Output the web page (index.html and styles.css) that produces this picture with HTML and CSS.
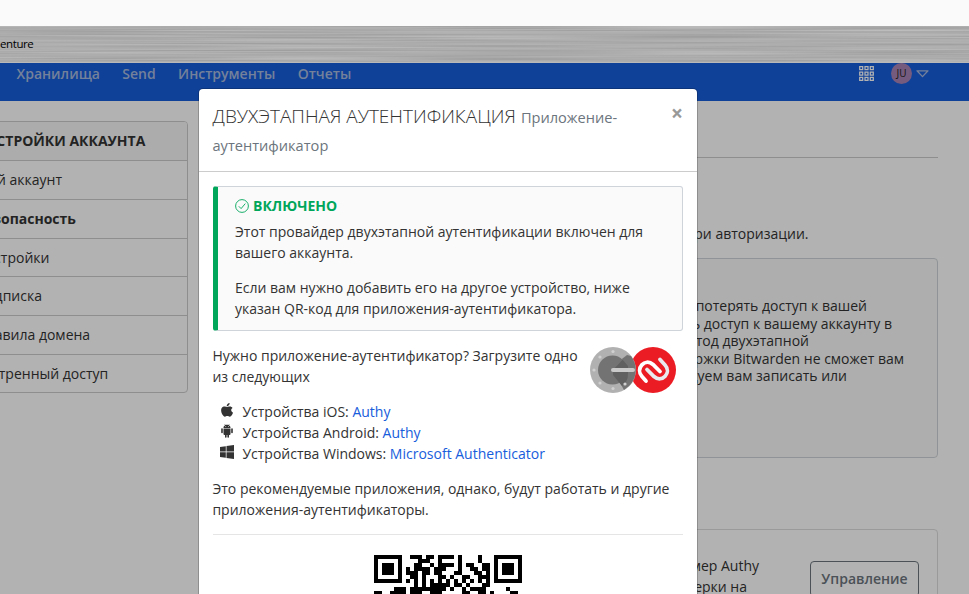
FILE: index.html
```
<!DOCTYPE html>
<html lang="ru">
<head>
<meta charset="utf-8">
<title>Двухэтапная аутентификация</title>
<link rel="stylesheet" href="styles.css">
</head>
<body>
<div class="topbar"></div>
<div class="bookmarks">
  <svg class="metal" width="969" height="37" aria-hidden="true"><filter id="brush" x="0" y="0" width="100%" height="100%" color-interpolation-filters="sRGB"><feTurbulence type="fractalNoise" baseFrequency="0.005 0.7" numOctaves="1" seed="4"/><feColorMatrix values="0.2 0 0 0 0.575  0.2 0 0 0 0.575  0.2 0 0 0 0.575  0 0 0 0 1"/></filter><rect width="969" height="37" filter="url(#brush)"/></svg>
  <span class="bookmark">enture</span>
</div>
<div class="app">
  <header class="navbar">
    <nav class="nav"><a>Хранилища</a><a>Send</a><a>Инструменты</a><a>Отчеты</a></nav>
    <div class="account">
      <svg class="grid-icon" width="15" height="15" viewBox="0 0 15 15"><g fill="none" stroke="#fff" stroke-width="1.25"><path d="M.7.7h3v3h-3zM6 .7h3v3H6zM11.3.7h3v3h-3zM.7 6h3v3h-3zM6 6h3v3H6zM11.3 6h3v3h-3zM.7 11.3h3v3h-3zM6 11.3h3v3H6zM11.3 11.3h3v3h-3z"/></g></svg>
      <span class="avatar">JU</span>
      <svg class="caret" width="13" height="8" viewBox="0 0 13 8"><path d="M1 .8h11L6.500 6.600z" fill="none" stroke="#a6b9dd" stroke-width="1.3" stroke-linejoin="round"/></svg>
    </div>
  </header>
  <div class="page">
    <aside class="menu">
      <h3>НАСТРОЙКИ АККАУНТА</h3>
      <a>Мой аккаунт</a><a class="active">Безопасность</a><a>Настройки</a><a>Подписка</a><a>Правила домена</a><a>Экстренный доступ</a>
    </aside>
    <main class="content">
      <div class="heading-rule"></div>
      <p class="intro">при авторизации.</p>
      <section class="warning">
        <p class="e1">потерять доступ к вашей</p><p class="e2">ь доступ к вашему аккаунту в</p><p class="e3">метод двухэтапной</p><p class="e4">держки Bitwarden не сможет вам</p><p class="e5">дуем вам записать или</p>
      </section>
      <section class="provider">
        <div class="provider-text"><p class="a1">пример Authy</p><p class="a2">проверки на</p></div>
        <button class="manage">Управление</button>
      </section>
    </main>
  </div>
  <div class="overlay">
    <div class="modal">
      <div class="modal-header">
        <h2>ДВУХЭТАПНАЯ АУТЕНТИФИКАЦИЯ <small>Приложение-<br>аутентификатор</small></h2>
        <span class="close">×</span>
      </div>
      <div class="modal-body">
        <div class="callout">
          <h3><svg width="14" height="14" viewBox="0 0 14 14"><circle cx="7" cy="7" r="6.400"/><path d="M3.800 7.300l2.300 2.300 4.200-5"/></svg>ВКЛЮЧЕНО</h3>
          <p>Этот провайдер двухэтапной аутентификации включен для<br>вашего аккаунта.</p>
          <p>Если вам нужно добавить его на другое устройство, ниже<br>указан QR-код для приложения-аутентификатора.</p>
        </div>
        <div class="need">
          <p>Нужно приложение-аутентификатор? Загрузите одно<br>из следующих</p>
          <svg width="87" height="48" viewBox="0 0 87 48">
            <circle cx="64" cy="24" r="23" fill="#ec1c24"/>
            <circle cx="24" cy="24" r="23" fill="#b1b1b1"/>
            <path d="M24 24L38 9l4 1a23 23 0 0 1-1 29l-6 5z" fill="#737373"/>
            <circle cx="23.500" cy="24" r="14.500" fill="#737373"/>
            <path d="M33 13l5-4-14 15v5l9 11a15 15 0 0 0 6-12v-8z" fill="#606060"/>
            <g fill="#d0d0d0"><circle cx="5" cy="24" r="1.600"/><circle cx="11" cy="11" r="1.600"/><circle cx="24" cy="5.500" r="1.600"/><circle cx="11" cy="37" r="1.600"/><circle cx="24" cy="42.500" r="1.600"/><circle cx="36" cy="38" r="1.600"/></g>
            <path d="M24 24h20" stroke="#c9c9c9" stroke-width="4" stroke-linecap="round"/>
            <g fill="none" stroke-width="3.800" stroke-linecap="round"><path d="M57 35l-4-4.500c-7-8 3-19 11-12l7 7" stroke="#fff"/><path d="M58 23.500l7 7c8 7 18-4 11-11.500L71 13.500" stroke="#e8eaee"/></g>
          </svg>
        </div>
        <ul>
          <li><svg width="14" height="14" viewBox="0 0 14 14"><path d="M9.600 0c.1 1.700-1.200 3.300-2.900 3.200C6.600 1.600 8 .2 9.600 0zM12.500 4.900c-2 1.200-1.600 3.900.5 4.800-.5 1.600-1.700 4-3.200 4-1 0-1.400-.6-2.500-.6s-1.500.6-2.400.6c-2.200 0-5-5.800-3.200-8.600C2.800 3.300 4.700 3.300 5.800 3.700l1.400.4 1.700-.5c1.500-.4 2.900.2 3.600 1.300z"/></svg>Устройства iOS: <a>Authy</a></li>
          <li><svg width="14" height="14" viewBox="0 0 14 14"><path d="M3.500 4.400h7V10a1 1 0 0 1-1 1H9v2a.8.8 0 0 1-1.600 0v-2h-.8v2A.8.800 0 0 1 5 13v-2h-.5a1 1 0 0 1-1-1zM1.200 5a.8.800 0 0 1 1.600 0v3.500a.8.800 0 0 1-1.600 0zM11.200 5a.8.800 0 0 1 1.600 0v3.500a.8.800 0 0 1-1.600 0zM3.500 3.900c0-1.200.6-2.100 1.600-2.600L4.500.2l.3-.2.7 1.100c1-.4 2-.4 3 0L9.200 0l.3.2-.6 1.100c1 .5 1.600 1.400 1.600 2.600z"/><path d="M5.400 2.200h.7v.7h-.7zM8 2.200h.7v.7H8z" fill="#fff"/></svg>Устройства Android: <a>Authy</a></li>
          <li><svg width="14" height="14" viewBox="0 0 14 14"><path d="M0 2l5.800-.8v5.400H0zM6.500 1.100L14 0v6.600H6.500zM0 7.300h5.800v5.400L0 11.900zM6.500 7.300H14V14l-7.500-1.100z"/></svg>Устройства Windows: <a>Microsoft Authenticator</a></li>
        </ul>
        <p>Это рекомендуемые приложения, однако, будут работать и другие<br>приложения-аутентификаторы.</p>
        <hr>
        <svg class="qr" width="148" height="40" viewBox="0 0 148 40"></svg>
      </div>
    </div>
  </div>
</div>
<script src="qr.js"></script>
</body>
</html>
```
FILE: qr.js
```
// Each character is one module; '#' is dark.
const rows = [
  '#######..###.##.####.#....#...#######',
  '#.....#....###..#....#....#...#.....#',
  '#.###.#...##..#.####.#.##..##.#.###.#',
  '#.###.#.#.####.###...#..##.##.#.###.#',
  '#.###.#.###.##.##...##...##.#.#.###.#',
  '#.....#..##.#...##.#..##..###.#.....#',
  '#######.#.#.#.#.#.#.#.#.#.#.#.#######',
  '..........#.#.#####.##.#...##........',
  '.....###.#########.#..#.####.....#...',
  '##..####.###..###.....##..##.#....##.'
];
const svg = document.querySelector('.qr');
let d = '';
rows.forEach((row, y) => [...row].forEach((c, x) => {
  if (c === '#') d += `M${x * 4} ${y * 4}h4v4h-4z`;
}));
const path = document.createElementNS('http://www.w3.org/2000/svg', 'path');
path.setAttribute('d', d);
svg.appendChild(path);
```
FILE: styles.css
```
* { box-sizing: border-box; }
body { margin: 0; height: 594px; overflow: hidden; font: 14px/21px "Open Sans", "Noto Sans", sans-serif; color: #333; background: #fff; }
h2, h3, p, ul { margin: 0; padding: 0; }
.topbar { height: 26px; background: #fafafa; }
.bookmarks { position: relative; height: 37px; border-bottom: 1px solid #b9b9b9; overflow: hidden; }
.metal { position: absolute; top: 0; left: 0; }
.bookmark { position: relative; display: block; padding: 8px 0 0; font: 11.500px/20px "Open Sans", sans-serif; letter-spacing: -.4px; color: #000; }
.app { position: relative; height: 531px; overflow: hidden; }
.navbar { height: 38px; display: flex; justify-content: space-between; background: #175ddc; padding: 0 40px 0 16.500px; }
.nav { display: flex; gap: 22.400px; font-weight: 600; color: #a6b9dd; }
.account { display: flex; height: 21px; align-items: center; }
.avatar { width: 21px; height: 21px; margin: 0 4px 0 17px; border-radius: 50%; background: #a885b5; color: #222; font: 10px/21px "Open Sans", sans-serif; text-align: center; }
.page { display: flex; justify-content: space-between; }
.menu { width: 233px; height: 272px; margin: 20px 0 0 -45px; border: 1px solid #ccc; border-radius: 4px; overflow: hidden; }
.menu h3 { height: 39px; padding: 0 20px; background: #f7f7f7; font-size: 14px; line-height: 38px; border-bottom: 1px solid #ccc; white-space: nowrap; }
.menu a { display: block; height: 38.800px; padding: 0 20px; line-height: 38.800px; border-bottom: 1px solid #ccc; }
.menu a:last-child { border: 0; }
.menu .active { font-weight: 700; }
.content { width: 288px; margin-right: 31px; white-space: nowrap; text-align: right; color: #333; }
.heading-rule { height: 57px; border-bottom: 1px solid #ccc; }
.intro { margin-top: 65px; padding-right: 129.500px; }
.warning { height: 200px; margin-top: 14px; padding-top: 38px; border: 1px solid #ced4da; border-radius: 4px; background: #fafafa; line-height: 17.500px; }
.e1 { padding-right: 70px; }
.e2 { padding-right: 45px; }
.e3 { padding-right: 128px; }
.e4 { padding-right: 33px; }
.e5 { padding-right: 90px; }
.provider { display: flex; justify-content: flex-end; margin-top: 71px; height: 100px; padding: 25px 18px 0 0; border: 1px solid #ddd; border-radius: 4px; }
.provider-text { margin-right: 51px; }
.a2 { padding-right: 12px; }
.manage { width: 109px; height: 36px; margin-top: 6px; padding: 0; border: 1px solid #6c757d; border-radius: 4px; background: transparent; color: #6c757d; font: 600 14px/34px "Open Sans", sans-serif; }
.overlay { position: absolute; inset: 0; background: rgba(0,0,0,.3); }
.modal { width: 498px; height: 600px; margin: 26px 0 0 199px; border-radius: 4px; background: #fff; box-shadow: 0 0 0 1px rgba(0,0,0,.2); }
.modal-header { display: flex; justify-content: space-between; height: 83px; padding: 14px 14px 14px 13.500px; border-bottom: 1px solid #ccc; }
.modal-header h2 { font-size: 19px; font-weight: 300; line-height: 27px; white-space: nowrap; }
.modal-header small { font-size: 14.600px; font-weight: 400; color: #6c757d; }
.close { font-size: 21px; line-height: 21px; font-weight: 700; color: #999; }
.modal-body { padding: 14px; }
.callout { height: 145px; margin-bottom: 14px; padding: 8px 16px 8px 17px; border: 1px solid #ced4da; border-left: 5px solid #00a65a; border-radius: 3px; background: #fafafa; }
.callout h3 { display: flex; align-items: center; gap: 4px; font-size: 14px; color: #00a65a; margin-bottom: 5px; }
.callout h3 svg { fill: none; stroke: #00a65a; stroke-width: .9; }
.callout p + p { margin-top: 14px; }
.need, .callout ~ ul, .callout ~ p { margin-left: -.6px; }
.need { display: flex; justify-content: space-between; height: 42px; margin-bottom: 14px; }
.need svg { margin: 1px 7px 0 0; flex: none; }
ul { list-style: none; margin-bottom: 14px; }
li { display: flex; height: 21px; padding-left: 8px; white-space: pre; }
li svg { margin: 2px 8px 0 0; fill: #333; }
li a { color: #175ddc; }
hr { border: 0; border-top: 1px solid #e5e5e5; margin: 14px 0 20px; }
.qr { display: block; margin: 0 auto; shape-rendering: crispEdges; }
```
